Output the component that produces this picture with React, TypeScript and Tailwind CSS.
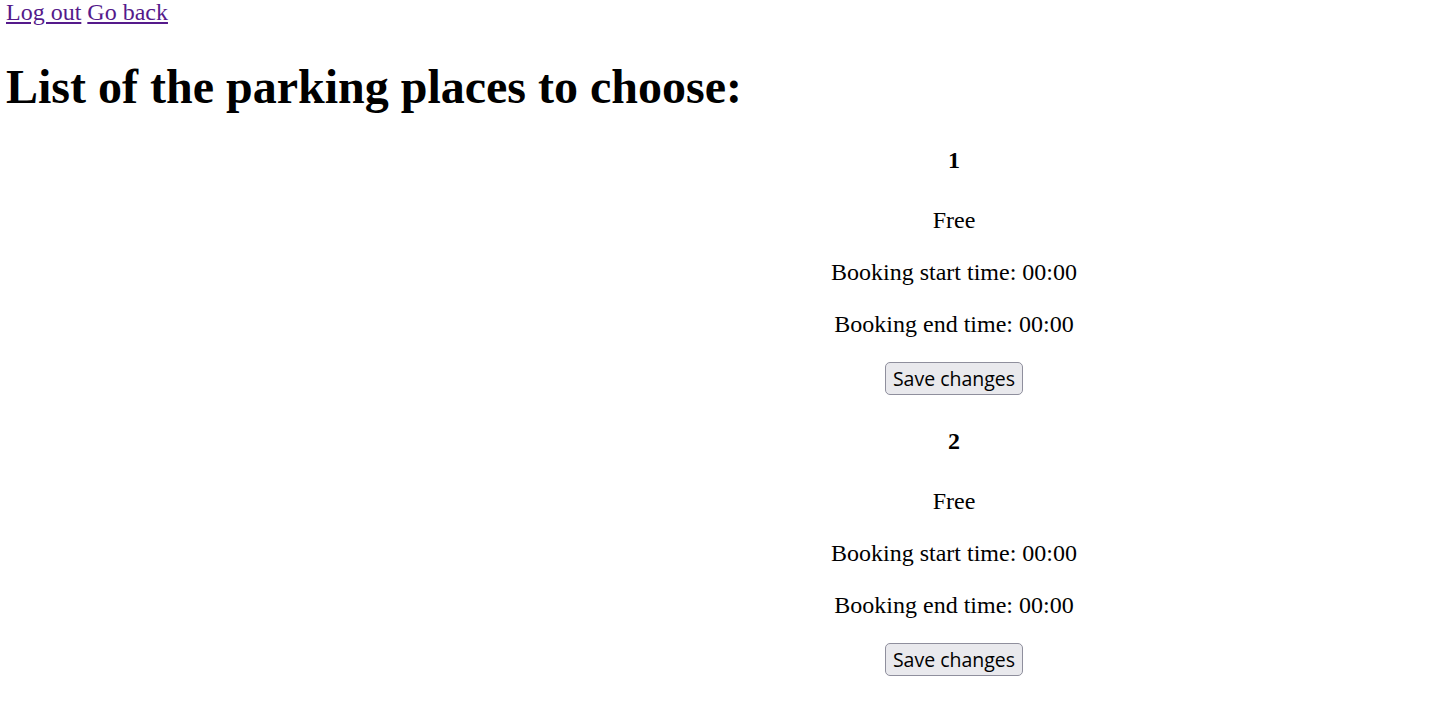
import React from "react";

const places = [1, 2];

function Place({ n }: { n: number }) {
  return (
    <div className="text-center">
      <h4 className="font-bold text-[24px] leading-[28px] mt-[32px] mb-[32px]">{n}</h4>
      <p className="text-[24px] leading-[28px] my-[24px]">Free</p>
      <p className="text-[24px] leading-[28px] my-[24px]">Booking start time: 00:00</p>
      <p className="text-[24px] leading-[28px] my-[24px]">Booking end time: 00:00</p>
      <div className="flex justify-center">
        <button
          type="button"
          className="h-[33px] w-[138px] rounded-[5px] border border-[#8f8f9d] bg-[#e9e9ed] text-[19.5px] leading-none text-black"
          style={{ fontFamily: '"Open Sans", "Noto Sans", sans-serif' }}
        >
          Save changes
        </button>
      </div>
    </div>
  );
}

export default function App() {
  return (
    <div
      className="min-h-[701px] bg-white text-black px-[6px]"
      style={{ fontFamily: '"Liberation Serif", "Times New Roman", serif' }}
    >
      <div className="text-[24px] leading-[27px] -mt-[1px]">
        <a href="#" className="text-[#551a8b] underline">Log out</a>{" "}
        <a href="#" className="text-[#551a8b] underline">Go back</a>
      </div>
      <h1 className="text-[48px] leading-[54px] font-bold mt-[34px] mb-[0px]">
        List of the parking places to choose:
      </h1>
      <div className="pl-[458px]">
        {places.map((n) => (
          <Place key={n} n={n} />
        ))}
      </div>
    </div>
  );
}
